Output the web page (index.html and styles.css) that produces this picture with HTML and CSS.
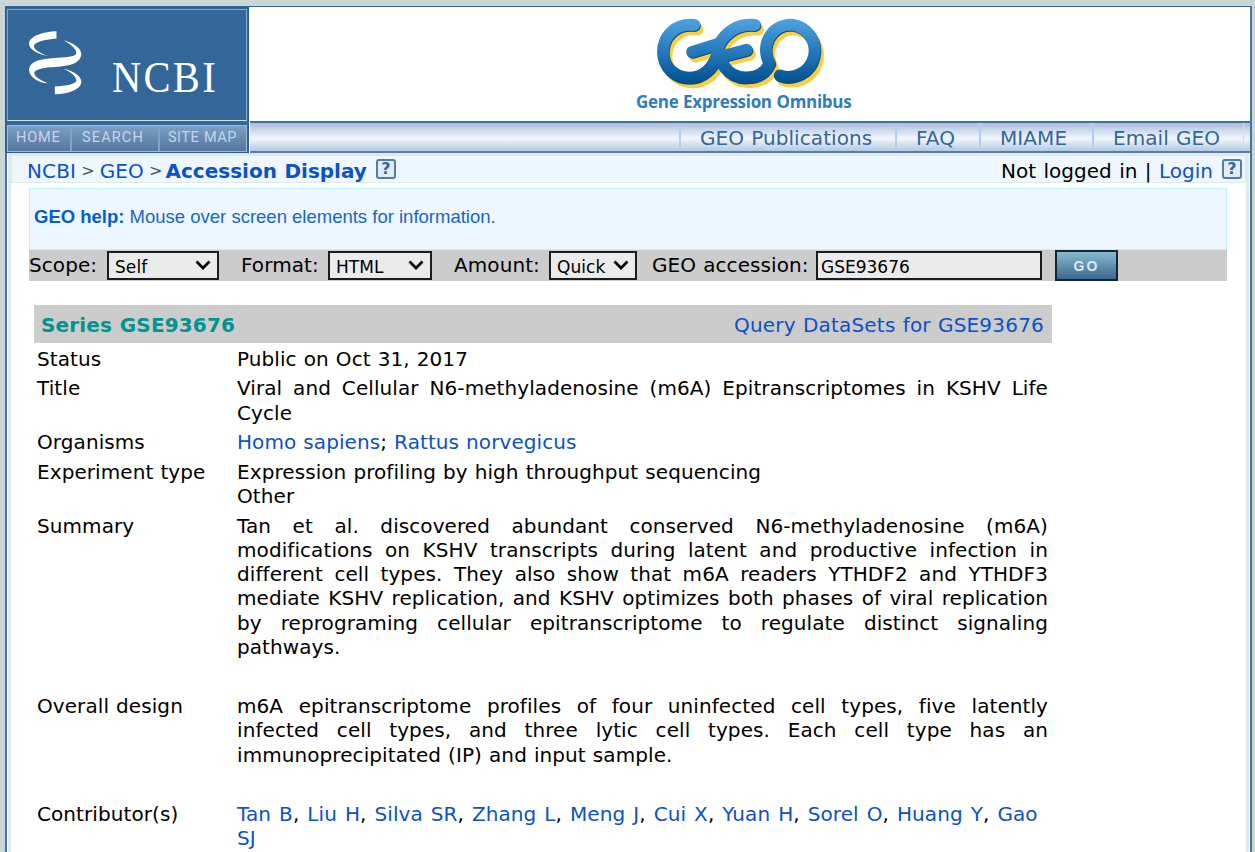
FILE: index.html
```
<!DOCTYPE html>
<html lang="en">
<head>
<meta charset="utf-8">
<title>GEO Accession viewer</title>
<link rel="stylesheet" href="styles.css">
</head>
<body>
<div class="page">
  <header class="top">
    <div class="ncbi">
      <div class="brand">
        <svg class="helix" viewBox="0 0 160 192" width="53" height="64"><path fill="#fff" d="M83 0V22C53 25 21 31 15 43C13 55 34 66 57 75C29 70 0 56 0 37C2 12 49 1 83 0ZM105 27C137 36 159 53 158 70C153 104 109 105 61 109C32 112 14 119 16 128C19 141 40 150 57 157C31 156 0 139 0 116C3 88 41 83 86 80C122 78 143 76 143 65C142 51 123 38 105 27ZM105 113C139 121 158 137 158 153C157 177 115 190 78 190V167C112 165 143 160 143 148C142 134 124 123 105 113Z"/></svg>
        <span class="brand-name">NCBI</span>
      </div>
      <nav class="subnav"><a class="home">HOME</a><a class="search">SEARCH</a><a class="map">SITE MAP</a></nav>
    </div>
    <div class="banner">
      <div class="geo">
        <svg class="geo-logo" viewBox="105 50 525 220" width="175" height="73">
          <defs>
            <linearGradient id="g" gradientUnits="userSpaceOnUse" x1="0" y1="55" x2="0" y2="250"><stop offset="0" stop-color="#4fa3df"/><stop offset=".5" stop-color="#2679bb"/><stop offset="1" stop-color="#00508e"/></linearGradient>
            <g id="letters" fill="none" stroke-linecap="round" stroke-linejoin="round">
              <path stroke-width="36" d="M222 74C165 68 128 108 128 155C128 200 163 233 207 233C249 233 278 204 290 165M216 155L298 130C320 94 355 70 404 74"/>
              <path stroke-width="36" d="M298 128C284 178 325 236 382 232C415 231 438 215 449 190C421 139 450 73 516 73A79 79 0 1 1 480 226M318 165L380 149"/>
            </g>
          </defs>
          <use href="#letters" stroke="#fbce3f" x="10" y="14"/>
          <use href="#letters" stroke="#0b4a7d" x="2" y="3"/>
          <use href="#letters" stroke="url(#g)"/>
        </svg>
        <span class="geo-name">Gene Expression Omnibus</span>
      </div>
      <nav class="mainnav"><a class="n1">GEO Publications</a><a class="n2">FAQ</a><a class="n3">MIAME</a><a class="n4">Email GEO</a><i></i></nav>
    </div>
  </header>
  <div class="crumbs">
    <div class="trail"><a>NCBI</a><span>&gt;</span><a>GEO</a><span>&gt;</span><a class="current">Accession Display</a><b class="help">?</b></div>
    <div class="login">Not logged in | <a>Login</a><b class="help">?</b></div>
  </div>
  <main class="main">
    <div class="hint"><p><b>GEO help:</b> Mouse over screen elements for information.</p></div>
    <form class="tools">
      <label class="scope">Scope:</label><span class="select s1">Self<svg width="16" height="10" viewBox="0 0 16 10"><path d="M1.5 1.5L8 8L14.500 1.500"/></svg></span>
      <label class="format">Format:</label><span class="select s2">HTML<svg width="16" height="10" viewBox="0 0 16 10"><path d="M1.5 1.5L8 8L14.500 1.500"/></svg></span>
      <label class="amount">Amount:</label><span class="select s3">Quick<svg width="16" height="10" viewBox="0 0 16 10"><path d="M1.5 1.5L8 8L14.500 1.500"/></svg></span>
      <label class="acc">GEO accession:</label><input class="field" value="GSE93676"><button class="go" type="button">GO</button>
    </form>
    <section class="record">
      <div class="title"><strong>Series GSE93676</strong><a>Query DataSets for GSE93676</a></div>
      <dl class="rows">
        <dt>Status</dt><dd>Public on Oct 31, 2017</dd>
        <dt>Title</dt><dd><span class="j">Viral and Cellular N6-methyladenosine (m6A) Epitranscriptomes in KSHV Life</span>Cycle</dd>
        <dt>Organisms</dt><dd><a>Homo sapiens</a>; <a>Rattus norvegicus</a></dd>
        <dt>Experiment type</dt><dd>Expression profiling by high throughput sequencing<br>Other</dd>
        <dt>Summary</dt><dd class="long"><span class="j">Tan et al. discovered abundant conserved N6-methyladenosine (m6A)</span><span class="j">modifications on KSHV transcripts during latent and productive infection in</span><span class="j">different cell types. They also show that m6A readers YTHDF2 and YTHDF3</span><span class="j">mediate KSHV replication, and KSHV optimizes both phases of viral replication</span><span class="j">by reprograming cellular epitranscriptome to regulate distinct signaling</span>pathways.</dd>
        <dt>Overall design</dt><dd class="long"><span class="j">m6A epitranscriptome profiles of four uninfected cell types, five latently</span><span class="j">infected cell types, and three lytic cell types. Each cell type has an</span>immunoprecipitated (IP) and input sample.</dd>
        <dt>Contributor(s)</dt><dd class="people"><a>Tan B</a>, <a>Liu H</a>, <a>Silva SR</a>, <a>Zhang L</a>, <a>Meng J</a>, <a>Cui X</a>, <a>Yuan H</a>, <a>Sorel O</a>, <a>Huang Y</a>, <a>Gao<br>SJ</a></dd>
      </dl>
    </section>
  </main>
</div>
</body>
</html>
```
FILE: styles.css
```
* { box-sizing: border-box; }
body { margin: 0; height: 852px; overflow: hidden; padding: 6px 3px 0 5px; background: repeating-linear-gradient(#cbd8d6 0 3px, #c6d4d2 3px 4px); font: 20px/24.25px "DejaVu Sans", sans-serif; color: #000; letter-spacing: .08px; word-spacing: .6px; }
a { color: #0b51c8; }
.page { height: 846px; background: #fff; border: solid #4674a6; border-width: 1px 2px 0; border-top-color: #336699; }
.top { display: flex; height: 146px; margin-left: -2px; }
.ncbi { width: 244px; height: 146px; background: #336699; border: 1px solid #2b5d90; }
.brand { height: 112px; margin: 1px 1px 0; display: flex; align-items: flex-start; padding: 21px 0 0 21px; border: 1px solid #85a7c9; border-bottom: 1px solid #d5e0e6; }
.helix { display: block; }
.brand-name { font: 44px/46px "Liberation Serif", serif; color: #fff; margin: 24px 0 0 30px; letter-spacing: 2.500px; transform: scaleX(.92); transform-origin: left; }
.subnav { display: flex; height: 27px; margin: 4px 1px 0; border: 1px solid #9bb8d5; background: linear-gradient(#7b9fc5, #56779d); font: 14.5px/24px Roboto, sans-serif; }
.subnav a { color: #c5d5e8; letter-spacing: 1.15px; padding-left: 8px; border-right: 2px solid #7da2cb; }
.subnav .home { width: 64px; letter-spacing: .8px; }
.subnav .search { width: 88px; padding-left: 10px; }
.subnav .map { flex: 1; white-space: nowrap; letter-spacing: .5px; border: 0; }
.banner { flex: 1; min-width: 0; padding-left: 1px; }
.geo { height: 114px; padding: 10px 0 0 382px; display: flex; flex-direction: column; width: 620px; }
.geo-logo { display: block; margin-left: 23px; }
.geo-name { font: bold 17px/20px "Open Sans", sans-serif; color: #2f7db9; margin-top: 2px; margin-left: 4px; white-space: nowrap; letter-spacing: -.3px; }
.mainnav { height: 32px; display: flex; justify-content: flex-end; border-top: 2px solid #44719f; border-bottom: 2px solid #587eac; background: linear-gradient(#a9bfda, #f2f7ff 55%, #b3c8df); line-height: 31px; }
.mainnav a { color: #336699; border-left: 2px solid #b2ccf4; padding-left: 19px; white-space: nowrap; }
.n1 { width: 216px; } .n2 { width: 84px; } .n3 { width: 113px; } .n4 { width: 151px; }
.mainnav i { width: 7px; border-left: 1px solid #d5dde8; }
.crumbs { height: 30px; margin: 0 1px; border: solid #dfeaea; border-width: 3px 4px 1px; background: #eef7ff; display: flex; justify-content: space-between; padding: 3px 3px 0 15px; }
.trail, .login { display: flex; white-space: pre; }
.trail span { color: #456; font-size: 16px; margin: 0 5px; }
.trail a { letter-spacing: .15px; }
.trail .current { font-weight: bold; letter-spacing: 0; margin-left: -2px; }
.login { word-spacing: 1.1px; letter-spacing: 0; }
.help { width: 20px; height: 20px; border: 2px solid #527da7; border-radius: 3px; background: #e0edf7; color: #336699; font: bold 16px/16px "DejaVu Sans", sans-serif; text-align: center; margin: 0 0 0 9px; }
.main { height: 670px; border: solid #e0ebea; border-width: 0 3px; margin: 0 1px; padding: 5px 19px 0 18px; }
.hint { height: 62px; border: 1px solid #bff3fb; background: #eef7ff; padding: 17px 4px; font: 18.5px/22px "Liberation Sans", sans-serif; color: #1766c8; letter-spacing: 0; word-spacing: 0; }
.hint p { margin: 0; }
.hint b { color: #0060c8; }
.tools { height: 31px; background: #ccc; display: flex; align-items: center; white-space: nowrap; }
.select, .field { height: 29px; border: 2px solid #1c1c1c; background: #ebebeb; font: 17px/27px "DejaVu Sans", sans-serif; }
.select { display: flex; justify-content: space-between; align-items: center; padding: 3px 6px 0; }
.select svg { margin-top: -4px; }
.select path { fill: none; stroke: #000; stroke-width: 2.700; }
.scope { width: 78px; } .s1 { width: 112px; }
.format { width: 109px; padding-left: 22px; } .s2 { width: 104px; }
.amount { width: 117px; padding-left: 22px; } .s3 { width: 88px; }
.acc { width: 179px; padding-left: 15px; } .field { width: 226px; padding: 2px 3px 0; border-radius: 0; }
.go { width: 63px; height: 31px; margin-left: 13px; border: 2px solid #122638; background: linear-gradient(#88bad1, #3c688f); color: #dce8f0; font: bold 14px "Liberation Sans", sans-serif; letter-spacing: 2px; padding: 0; }
.record { width: 1018px; margin: 24px 0 0 5px; }
.title { height: 38px; background: #ccc; display: flex; justify-content: space-between; align-items: center; padding: 2px 8px 0 7px; }
.title strong { color: #009490; letter-spacing: .15px; }
.title a { letter-spacing: .2px; }
.rows { display: grid; grid-template-columns: 200px 811px; row-gap: 5.350px; margin: 3.800px 0 0 3px; }
.rows dt, .rows dd { margin: 0; white-space: nowrap; }
.long { padding-bottom: 29.700px; }
.people { word-spacing: 1.550px; }
.j { display: block; text-align: justify; text-align-last: justify; white-space: normal; word-spacing: 0; }
```
